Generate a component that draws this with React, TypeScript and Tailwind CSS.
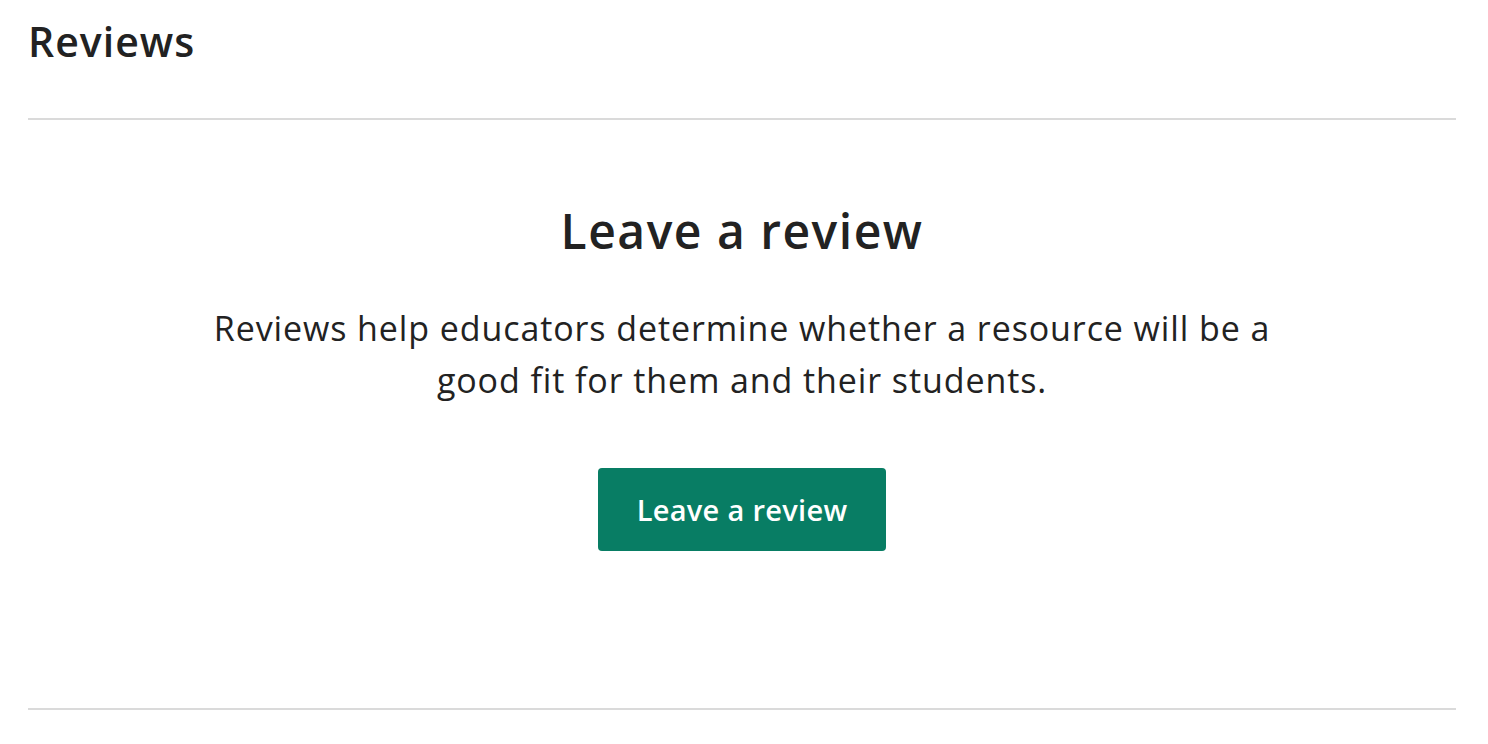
export default function App() {
  return (
    <div className="bg-white w-[1488px] h-[744px] overflow-hidden pl-[28px] pr-[32px] text-[#222222]" style={{ fontFamily: '"Open Sans", Lato, sans-serif' }}>
      <h2 className="pt-[15px] text-[41px] leading-[52px] font-semibold tracking-[1px] h-[118px]">Reviews</h2>
      <div className="border-t-2 border-[#dadada] flex flex-col items-center h-[590px]">
        <h3 className="mt-[78px] text-[48px] leading-[66px] font-semibold tracking-[1.5px]">Leave a review</h3>
        <p className="mt-[38px] text-[34px] leading-[52px] tracking-[0.9px] text-center w-[1090px]">
          Reviews help educators determine whether a resource will be a good fit for them and their students.
        </p>
        <button className="mt-[62px] w-[288px] h-[83px] bg-[#087d64] rounded-[4px] text-white text-[29px] font-semibold tracking-[0.3px]">
          Leave a review
        </button>
      </div>
      <div className="border-t-2 border-[#dadada]" />
    </div>
  );
}
